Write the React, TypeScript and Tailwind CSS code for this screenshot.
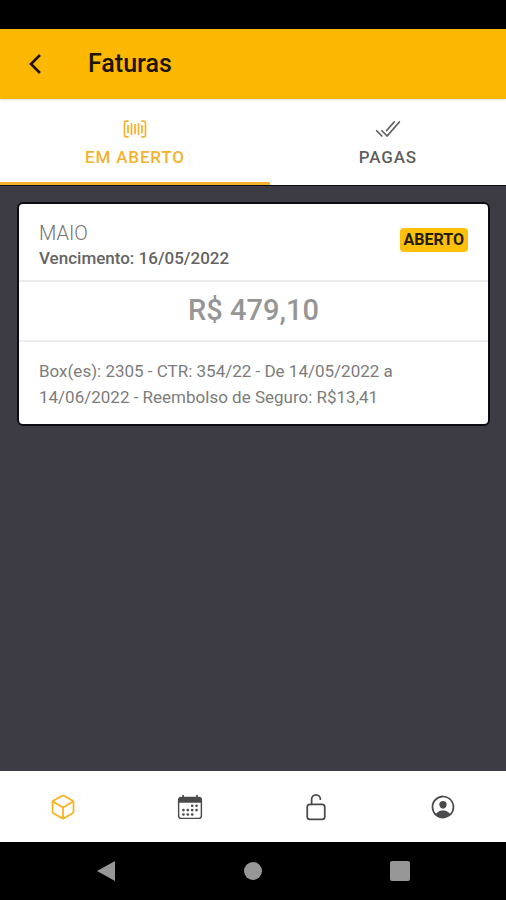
import { ReactNode } from "react";
import {
  IoBarcodeOutline,
  IoCheckmarkDoneOutline,
  IoCubeOutline,
  IoLockOpenOutline,
  IoPersonCircleOutline,
} from "react-icons/io5";

interface Invoice {
  month: string;
  dueDate: string;
  status: string;
  amount: string;
  description: string;
}

const invoices: Invoice[] = [
  {
    month: "MAIO",
    dueDate: "16/05/2022",
    status: "ABERTO",
    amount: "R$ 479,10",
    description:
      "Box(es): 2305 - CTR: 354/22 - De 14/05/2022 a 14/06/2022 - Reembolso de Seguro: R$13,41",
  },
];

const CalendarIcon = () => (
  <svg viewBox="0 0 512 512" className="size-7" fill="currentColor" aria-hidden="true">
    <rect x="48" y="80" width="416" height="384" rx="48" fill="none" stroke="currentColor" strokeWidth="26" />
    <path d="M48 176v-48c0-26 22-48 48-48h320c26 0 48 22 48 48v48z" />
    <path d="M128 48v32M384 48v32" stroke="currentColor" strokeWidth="32" strokeLinecap="round" />
    <circle cx="296" cy="232" r="24" />
    <circle cx="376" cy="232" r="24" />
    <circle cx="136" cy="312" r="24" />
    <circle cx="216" cy="312" r="24" />
    <circle cx="296" cy="312" r="24" />
    <circle cx="376" cy="312" r="24" />
    <circle cx="136" cy="392" r="24" />
    <circle cx="216" cy="392" r="24" />
    <circle cx="296" cy="392" r="24" />
  </svg>
);

const NavButton = ({ label, active, children }: { label: string; active?: boolean; children: ReactNode }) => (
  <button
    aria-label={label}
    className={`flex items-center justify-center ${active ? "text-[#fbb21a]" : "text-[#4a4a4c]"}`}
  >
    {children}
  </button>
);

const InvoiceCard = ({ invoice }: { invoice: Invoice }) => (
  <article className="rounded-md border-2 border-[#0c0c12] bg-white">
    <div className="flex items-start justify-between border-b-2 border-[#e9ebea] px-5 pt-4 pb-2.5">
      <div>
        <h2 className="text-[20px] leading-[26px] font-light text-[#747474]">{invoice.month}</h2>
        <p className="text-[17px] leading-6 font-medium text-[#646464]">
          Vencimento: {invoice.dueDate}
        </p>
      </div>
      <span className="mt-2 rounded bg-[#fdc10c] px-1 text-[16px] leading-6 font-bold text-[#241c04]">
        {invoice.status}
      </span>
    </div>
    <p className="border-b-2 border-[#ebeeed] pt-2.5 pb-3 text-center text-[29px] leading-9 font-medium text-[#969696]">
      {invoice.amount}
    </p>
    <p className="px-5 pt-4 pb-3.5 text-[17px] leading-[26px] text-[#7c7c7c]">{invoice.description}</p>
  </article>
);

const App = () => {
  return (
    <div className="flex min-h-screen flex-col bg-[#3d3c44] font-[Roboto,sans-serif]">
      {/* Status bar */}
      <div className="h-[29px] bg-black" />

      {/* Header */}
      <header className="z-10 flex h-[70px] items-center bg-[#fcb800] px-5 text-[#1c1400] shadow">
        <button aria-label="Voltar" className="flex size-8 items-center justify-center">
          <svg viewBox="0 0 24 24" className="size-6" fill="none" stroke="currentColor" strokeWidth="2.6" aria-hidden="true">
            <path d="M16 3 7 12l9 9" />
          </svg>
        </button>
        <h1 className="pl-9 text-[25px] font-medium">Faturas</h1>
      </header>

      {/* Tabs */}
      <div role="tablist" className="grid grid-cols-[8fr_7fr] border-b border-[#0c0c12] bg-white">
        <button
          role="tab"
          aria-selected="true"
          className="flex h-[86px] flex-col items-center border-b-[3px] border-[#f3b32f] pt-4 text-[#f3b32f]"
        >
          <IoBarcodeOutline className="size-7" />
          <span className="text-[17px] leading-7 font-medium tracking-wider">EM ABERTO</span>
        </button>
        <button
          role="tab"
          aria-selected="false"
          className="flex h-[86px] flex-col items-center pt-4 text-[#5f5f61]"
        >
          <IoCheckmarkDoneOutline className="size-7" />
          <span className="text-[17px] leading-7 font-medium tracking-wider">PAGAS</span>
        </button>
      </div>

      {/* Invoices */}
      <main className="flex-1 py-4 pr-4 pl-[17px]">
        {invoices.map((invoice) => (
          <InvoiceCard key={invoice.month} invoice={invoice} />
        ))}
      </main>

      {/* Bottom navigation */}
      <nav className="grid h-[71px] grid-cols-4 bg-white">
        <NavButton label="Boxes" active>
          <IoCubeOutline className="size-7" />
        </NavButton>
        <NavButton label="Agenda">
          <CalendarIcon />
        </NavButton>
        <NavButton label="Acesso">
          <IoLockOpenOutline className="size-7" />
        </NavButton>
        <NavButton label="Perfil">
          <IoPersonCircleOutline className="size-7" />
        </NavButton>
      </nav>

      {/* System buttons */}
      <div className="grid h-[58px] grid-cols-3 bg-black px-8 text-[#979797]">
        <button aria-label="Voltar no sistema" className="flex items-center justify-center">
          <svg viewBox="0 0 20 22" className="h-[22px] w-5" fill="currentColor" aria-hidden="true">
            <path d="M19 1v20L1 11z" />
          </svg>
        </button>
        <button aria-label="Início" className="flex items-center justify-center">
          <span className="size-[18px] rounded-full bg-current" />
        </button>
        <button aria-label="Recentes" className="flex items-center justify-center">
          <span className="size-5 rounded-xs bg-current" />
        </button>
      </div>
    </div>
  );
};

export default App;
